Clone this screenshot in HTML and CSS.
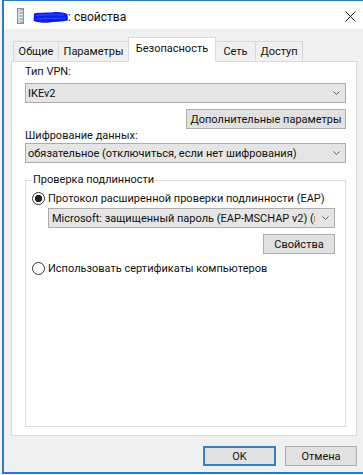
FILE: index.html
```html
<!DOCTYPE html>
<html lang="ru">
<head>
    <meta charset="UTF-8">
    <meta name="viewport" content="width=device-width, initial-scale=1.0">
    <title>Свойства</title>
    <link rel="stylesheet" href="styles.css">
</head>
<body>

<div class="window">
    <div class="titlebar">
        <svg class="app-icon" width="7" height="16" viewBox="0 0 7 16">
            <rect x="0.5" y="0.5" width="6" height="15" fill="#aab6c3" stroke="#8593a4"/>
            <rect x="1" y="1" width="2" height="14" fill="#c9d3de"/>
            <path d="M1 3.5h5M1 6.5h5M1 9.5h5M1 12.5h5" stroke="#e4eaf0" stroke-width="1"/>
        </svg>
        <!-- name of the connection is scribbled out in the screenshot -->
        <svg class="redact" width="35" height="12" viewBox="0 0 35 12">
            <path d="M1 2.5C6 1 13 2 20 1.2C26 0.5 31 1.5 34.5 3L35 9.5C29 11 22 10.5 15 11.8C9 12 4 11.2 0.5 10Z" fill="#0b1ff0"/>
            <path d="M3 4.5C10 3.5 20 4 31 3.8M4 8C12 7.2 22 7.6 32 7" stroke="#3a4dff" stroke-width="1" fill="none"/>
        </svg>
        <span class="title">: свойства</span>
        <svg class="close" width="11" height="11" viewBox="0 0 11 11">
            <path d="M0.5 0.5L10.5 10.5M10.5 0.5L0.5 10.5" stroke="#111" stroke-width="1"/>
        </svg>
    </div>

    <div class="content">
        <div class="tabs">
            <div class="tab tab-general">Общие</div>
            <div class="tab tab-params">Параметры</div>
            <div class="tab tab-security active">Безопасность</div>
            <div class="tab tab-net after-active">Сеть</div>
            <div class="tab tab-access last">Доступ</div>
        </div>

        <div class="panel">
            <div class="label first">Тип VPN:</div>
            <div class="combo">
                <span class="combo-text">IKEv2</span>
                <span class="chevron"><svg width="7" height="4" viewBox="0 0 7 4"><path d="M0.5 0.5L3.5 3.5L6.5 0.5" fill="none" stroke="#606060"/></svg></span>
            </div>
            <div class="btn-row">
                <button class="btn btn-advanced">Дополнительные параметры</button>
            </div>
            <div class="label">Шифрование данных:</div>
            <div class="combo">
                <span class="combo-text">обязательное (отключиться, если нет шифрования)</span>
                <span class="chevron"><svg width="7" height="4" viewBox="0 0 7 4"><path d="M0.5 0.5L3.5 3.5L6.5 0.5" fill="none" stroke="#606060"/></svg></span>
            </div>

            <fieldset class="group">
                <legend>Проверка подлинности</legend>
                <div class="radio-row">
                    <span class="radio checked"></span>
                    <span>Протокол расширенной проверки подлинности (EAP)</span>
                </div>
                <div class="combo combo-eap">
                    <span class="combo-text">Microsoft: защищенный пароль (EAP-MSCHAP v2) (шифрование включено)</span>
                    <span class="chevron"><svg width="7" height="4" viewBox="0 0 7 4"><path d="M0.5 0.5L3.5 3.5L6.5 0.5" fill="none" stroke="#606060"/></svg></span>
                </div>
                <div class="btn-row">
                    <button class="btn btn-props">Свойства</button>
                </div>
                <div class="radio-row second">
                    <span class="radio"></span>
                    <span>Использовать сертификаты компьютеров</span>
                </div>
            </fieldset>
        </div>

        <div class="footer">
            <button class="btn btn-ok">OK</button>
            <button class="btn btn-cancel">Отмена</button>
        </div>
    </div>
</div>

</body>
</html>
```

FILE: styles.css
```css
body {
    margin: 0;
    background: #f5f5f5;
    font-family: Roboto, "Liberation Sans", sans-serif;
    font-size: 11px;
    color: #111;
    overflow: hidden;
}
.window {
    margin-left: 2px;
    width: 360px;
    height: 471px;
    border-top: 1px solid #2b7ac6;
    border-left: 2px solid #2b7ac6;
    border-bottom: 2px solid #2b7ac6;
    background: #f0f0f0;
    display: flex;
    flex-direction: column;
}
.titlebar {
    height: 28px;
    background: #fff;
    display: flex;
    align-items: center;
    padding-left: 13px;
}
.app-icon {
    margin-top: 2px;
}
.redact {
    margin-left: 9px;
    margin-top: 3px;
}
.title {
    padding-top: 4px;
    font-size: 12px;
}
.close {
    margin-left: auto;
    margin-right: 8px;
    margin-top: 2px;
}
.content {
    flex: 1;
    padding: 0 7px;
    display: flex;
    flex-direction: column;
}
.tabs {
    display: flex;
    align-items: flex-end;
    height: 24px;
    margin-top: 8px;
    padding-left: 2px;
    position: relative;
    z-index: 1;
}
.tab {
    box-sizing: border-box;
    height: 20px;
    border-top: 1px solid #d9d9d9;
    border-left: 1px solid #d9d9d9;
    background: #f0f0f0;
    text-align: center;
    line-height: 19px;
    white-space: nowrap;
}
.tab.active {
    height: 25px;
    margin-bottom: -1px;
    background: #fff;
    border-right: 1px solid #d9d9d9;
    line-height: 22px;
}
.tab.after-active {
    border-left: none;
}
.tab.last {
    border-right: 1px solid #d9d9d9;
}
.tab-general { width: 45px; }
.tab-params { width: 70px; }
.tab-security { width: 88px; }
.tab-net { width: 39px; }
.tab-access { width: 48px; }
.panel {
    box-sizing: border-box;
    height: 375px;
    border: 1px solid #d9d9d9;
    background: #fff;
    padding: 0 10px 8px 13px;
    display: flex;
    flex-direction: column;
}
.label {
    line-height: 14px;
}
.label.first {
    margin-top: 3px;
    margin-bottom: 4px;
}
.combo {
    box-sizing: border-box;
    height: 20px;
    border: 1px solid #acacac;
    background: #e5e5e5;
    display: flex;
    align-items: center;
    padding-left: 2px;
}
.combo-text {
    flex: 1;
    overflow: hidden;
    white-space: nowrap;
}
.chevron {
    flex: none;
    width: 17px;
    display: flex;
    justify-content: center;
    padding-left: 2px;
}
.btn-row {
    display: flex;
    justify-content: flex-end;
    margin-top: 6px;
}
.btn {
    box-sizing: border-box;
    height: 20px;
    padding: 0;
    font: inherit;
    color: #111;
    white-space: nowrap;
    background: #e1e1e1;
    border: 1px solid #adadad;
}
.btn-advanced { width: 160px; }
.btn-props { width: 72px; }
.group {
    flex: 1;
    min-width: 0;
    margin: 10px 0 0;
    padding: 3px 10px 0 6px;
    border: 1px solid #dcdcdc;
}
.group legend {
    padding: 0 1px;
    line-height: 14px;
}
.radio-row {
    display: flex;
    align-items: center;
    gap: 3px;
    height: 16px;
    white-space: nowrap;
}
.radio-row.second {
    margin-top: 6px;
}
.radio {
    flex: none;
    box-sizing: border-box;
    width: 13px;
    height: 13px;
    border: 1px solid #333;
    border-radius: 50%;
    background: #fff;
}
.radio.checked {
    background: radial-gradient(circle, #222 3.4px, #fff 4px);
}
.combo-eap {
    margin: 2px 0 0 16px;
    padding-left: 3px;
}
.footer {
    display: flex;
    justify-content: flex-end;
    gap: 9px;
    margin-top: 10px;
}
.btn-ok {
    width: 73px;
    border: 2px solid #3a7fc2;
}
.btn-cancel {
    width: 72px;
}
```
